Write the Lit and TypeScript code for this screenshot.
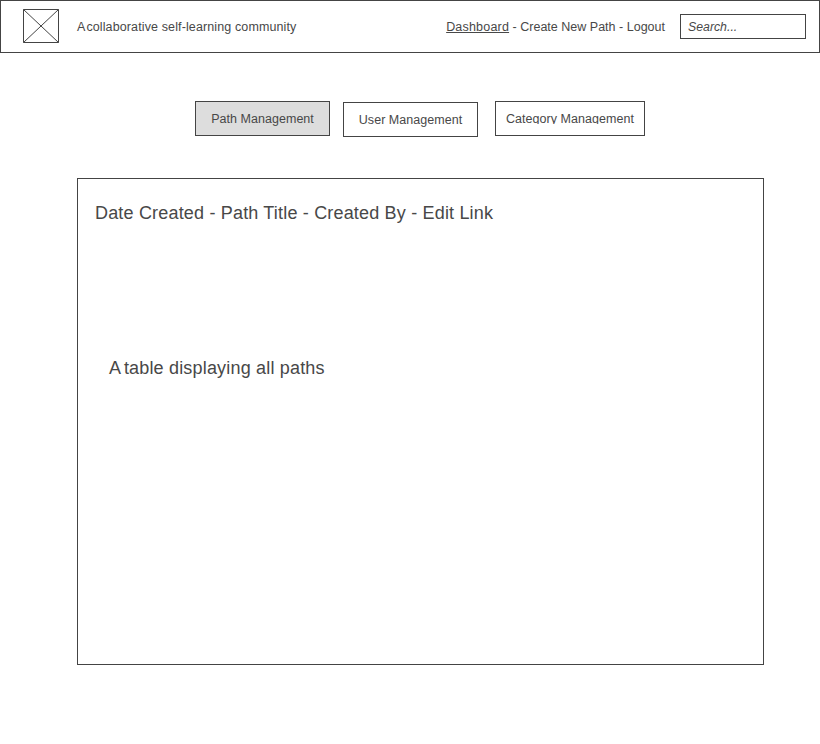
import { LitElement, html, css } from "lit";
import { customElement } from "lit/decorators.js";

@customElement("app-root")
class AppRoot extends LitElement {
  static styles = css`
    :host { display: block; height: 744px; background: #fff; color: #484848; font: 12.5px/16px "Liberation Sans", Arial, sans-serif; overflow: hidden; }
    * { box-sizing: border-box; }
    header { display: flex; align-items: center; height: 53px; border: 1px solid #444; padding: 0 13px 0 22px; }
    .logo { display: block; width: 36px; height: 34px; margin-top: -1px; }
    .tagline { margin-left: 18px; white-space: nowrap; letter-spacing: 0.12px; }
    .initial { word-spacing: -2px; }
    nav { margin-left: auto; white-space: nowrap; letter-spacing: 0.01px; }
    .current { text-decoration: underline; letter-spacing: 0.2px; }
    .search { width: 126px; height: 25px; margin-left: 15px; border: 1px solid #444; padding: 4px 7px; font-size: 12.3px; font-style: italic; }
    .tabs { display: flex; align-items: flex-start; margin: 48px 0 0 195px; height: 36px; }
    .tab { width: 135px; height: 35px; border: 1px solid #444; text-align: center; line-height: 34px; white-space: nowrap; letter-spacing: 0.04px; }
    .active { background: #ddd; }
    .user { margin: 1px 17px 0 13px; }
    .category { width: 150px; }
    .clip { display: block; height: 22px; overflow: hidden; }
    main { width: 687px; height: 487px; margin: 41px 0 0 77px; border: 1px solid #444; padding: 23px 17px; font-size: 18px; line-height: 22px; letter-spacing: 0.18px; }
    .note { margin: 133px 0 0 14px; }
    .note .initial { word-spacing: -1.5px; }
  `;
  render() {
    return html`
      <header>
        <svg class="logo" viewBox="0 0 36 34" fill="none" stroke="#444"><path d="M.5 .5H35.5V33.5H.5ZM.5 .5L35.5 33.5M35.5 .5L.5 33.5" /></svg>
        <div class="tagline"><span class="initial">A </span>collaborative self-learning community</div>
        <nav><span class="current">Dashboard</span> - Create New Path - Logout</nav>
        <div class="search">Search...</div>
      </header>
      <div class="tabs">
        <div class="tab active">Path Management</div>
        <div class="tab user">User Management</div>
        <div class="tab category"><span class="clip">Category Management</span></div>
      </div>
      <main>
        <div>Date Created - Path Title - Created By - Edit Link</div>
        <div class="note"><span class="initial">A </span>table displaying all paths</div>
      </main>
    `;
  }
}
